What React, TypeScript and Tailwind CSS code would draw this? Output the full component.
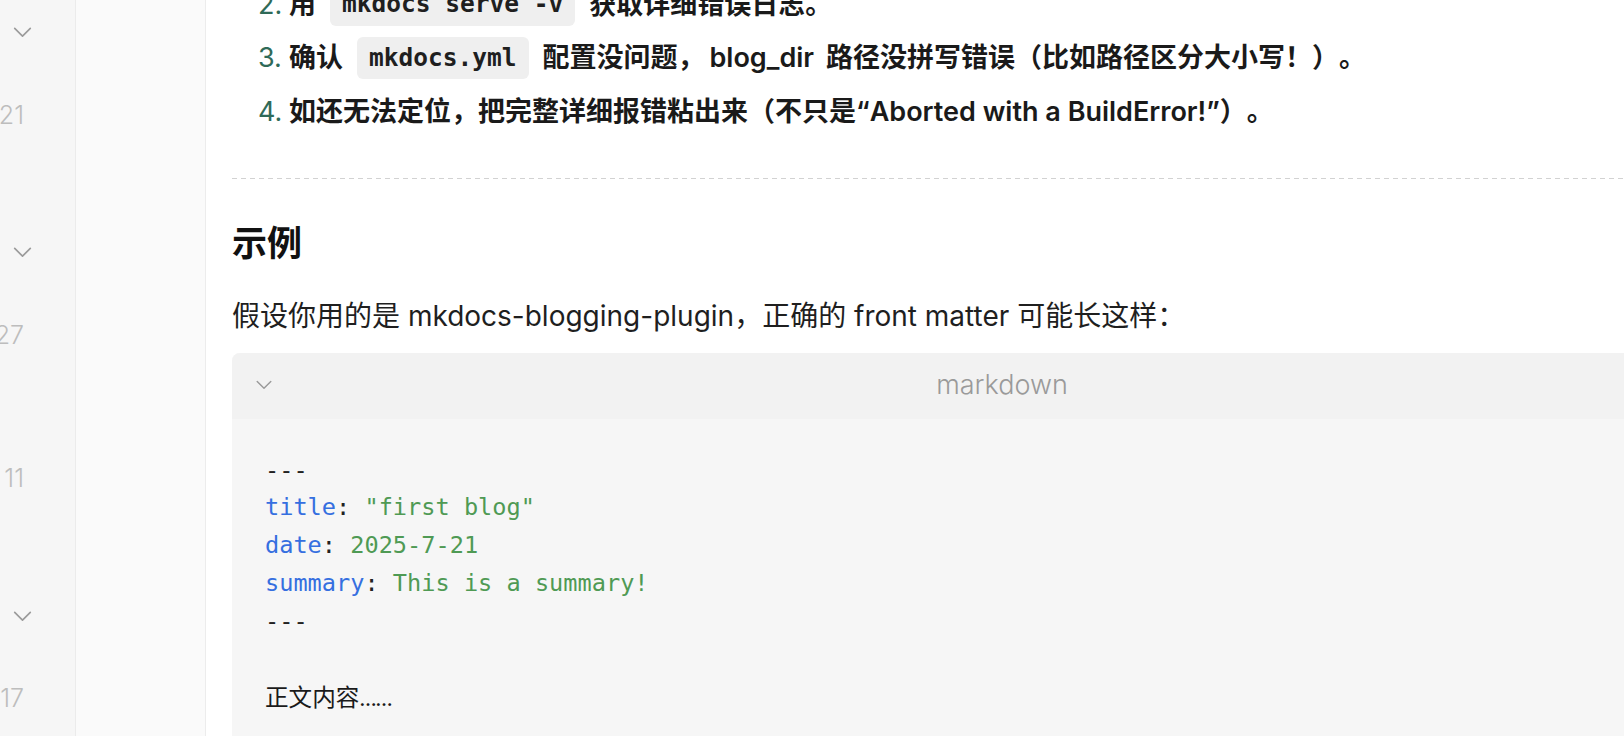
import React from "react"

const mono = "font-['DejaVu_Sans_Mono','Noto_Sans_CJK_SC',monospace]"

function Chevron({ className = "" }: { className?: string }) {
  return (
    <svg viewBox="0 0 20 12" className={className} fill="none">
      <polyline
        points="1.5,1.5 10,10 18.5,1.5"
        stroke="#9b9b9b"
        strokeWidth="1.8"
        strokeLinecap="round"
        strokeLinejoin="round"
      />
    </svg>
  )
}

function GutterNumber({ n, mt }: { n: string; mt: string }) {
  return (
    <div className={`${mt} flex h-[30px] w-[24px] items-center justify-end`}>
      <span className="whitespace-nowrap text-[25px] font-light leading-none text-[#bdbdbd]">
        {n}
      </span>
    </div>
  )
}

function GutterChevron({ mt }: { mt: string }) {
  return (
    <div className={`${mt} flex h-[30px] w-[44px] items-center justify-center`}>
      <Chevron className="h-[11px] w-[19px]" />
    </div>
  )
}

function Gutter() {
  return (
    <div className="flex w-[76px] shrink-0 flex-col border-r border-[#ebebeb] bg-[#f6f6f6]">
      <GutterChevron mt="mt-[17px]" />
      <GutterNumber n="21" mt="mt-[53px]" />
      <GutterChevron mt="mt-[107px]" />
      <GutterNumber n="27" mt="mt-[53px]" />
      <GutterNumber n="11" mt="mt-[113px]" />
      <GutterChevron mt="mt-[108px]" />
      <GutterNumber n="17" mt="mt-[52px]" />
    </div>
  )
}

function Code({ children }: { children: React.ReactNode }) {
  return (
    <code
      className={`${mono} mx-[14px] inline-flex h-[42px] items-center rounded-[6px] bg-[#efefef] px-[12px] text-[24.5px] font-bold text-[#1f1f1f]`}
    >
      {children}
    </code>
  )
}

function Item({ n, children }: { n: string; children: React.ReactNode }) {
  return (
    <li className="flex h-[53.5px] items-center whitespace-nowrap pl-[26px]">
      <span className="w-[31px] shrink-0 font-normal text-[#2f6a58]">{n}</span>
      <span className="flex items-center font-semibold text-[#1a1a1a]">{children}</span>
    </li>
  )
}

const lines: { k?: string; v?: string; raw?: string }[] = [
  { raw: "---" },
  { k: "title", v: '"first blog"' },
  { k: "date", v: "2025-7-21" },
  { k: "summary", v: "This is a summary!" },
  { raw: "---" },
  { raw: "" },
]

export default function App() {
  return (
    <div className="flex h-[736px] w-full overflow-hidden bg-white font-['Inter','Noto_Sans_CJK_SC',sans-serif] text-[27px] text-[#1a1a1a] [text-spacing-trim:space-all]">
      <Gutter />
      <div className="w-[130px] shrink-0 border-r border-[#ececec] bg-[#fafafa]" />
      <main className="min-w-0 flex-1 overflow-hidden pl-[26px]">
        <div className="-mt-[22px] w-[1540px]">
          <ol>
            <Item n="2.">
              用<Code>mkdocs serve -v</Code>获取详细错误日志。
            </Item>
            <Item n="3.">
              确认<Code>mkdocs.yml</Code>配置没问题，
              <span className="ml-[5px] mr-[12px]">blog_dir</span>路径没拼写错误（比如路径区分大小写！）。
            </Item>
            <Item n="4.">
              如还无法定位，把完整详细报错粘出来（不只是“Aborted with a BuildError!”）。
            </Item>
          </ol>

          <div className="mt-[39px] h-px bg-[repeating-linear-gradient(to_right,#d2d2d2_0_5px,transparent_5px_9px)]" />

          <h2 className="mt-[39px] h-[50px] text-[35px] font-bold leading-[50px] text-[#111]">
            示例
          </h2>

          <p className="mt-[28px] h-[40px] whitespace-nowrap text-[28px] leading-[40px] text-[#1f1f1f]">
            假设你用的是 mkdocs-blogging-plugin，正确的 front matter 可能长这样：
          </p>

          <div className="mt-[17px] overflow-hidden rounded-t-[8px] bg-[#f6f6f6]">
            <div className="relative flex h-[66px] items-center justify-center bg-[#f2f2f2]">
              <Chevron className="absolute left-[24px] top-[27px] h-[10px] w-[16px]" />
              <span className="text-[27px] font-light text-[#9a9a9a]">markdown</span>
            </div>
            <div className={`${mono} px-[33px] pt-[33px] pb-[40px] text-[23.6px] leading-[37.8px] text-[#222]`}>
              {lines.map((l, i) => (
                <div key={i} className="h-[37.8px] whitespace-pre">
                  {l.raw !== undefined ? (
                    l.raw
                  ) : (
                    <>
                      <span className="text-[#356fe0]">{l.k}</span>
                      <span>: </span>
                      <span className="text-[#4f9a54]">{l.v}</span>
                    </>
                  )}
                </div>
              ))}
              <div className="h-[37.8px] font-['Noto_Sans_CJK_SC',sans-serif] text-[#1a1a1a]">
                正文内容
                <span className="font-['Inter',sans-serif] text-[17px] font-bold tracking-[-1px]">……</span>
              </div>
            </div>
          </div>
        </div>
      </main>
    </div>
  )
}
